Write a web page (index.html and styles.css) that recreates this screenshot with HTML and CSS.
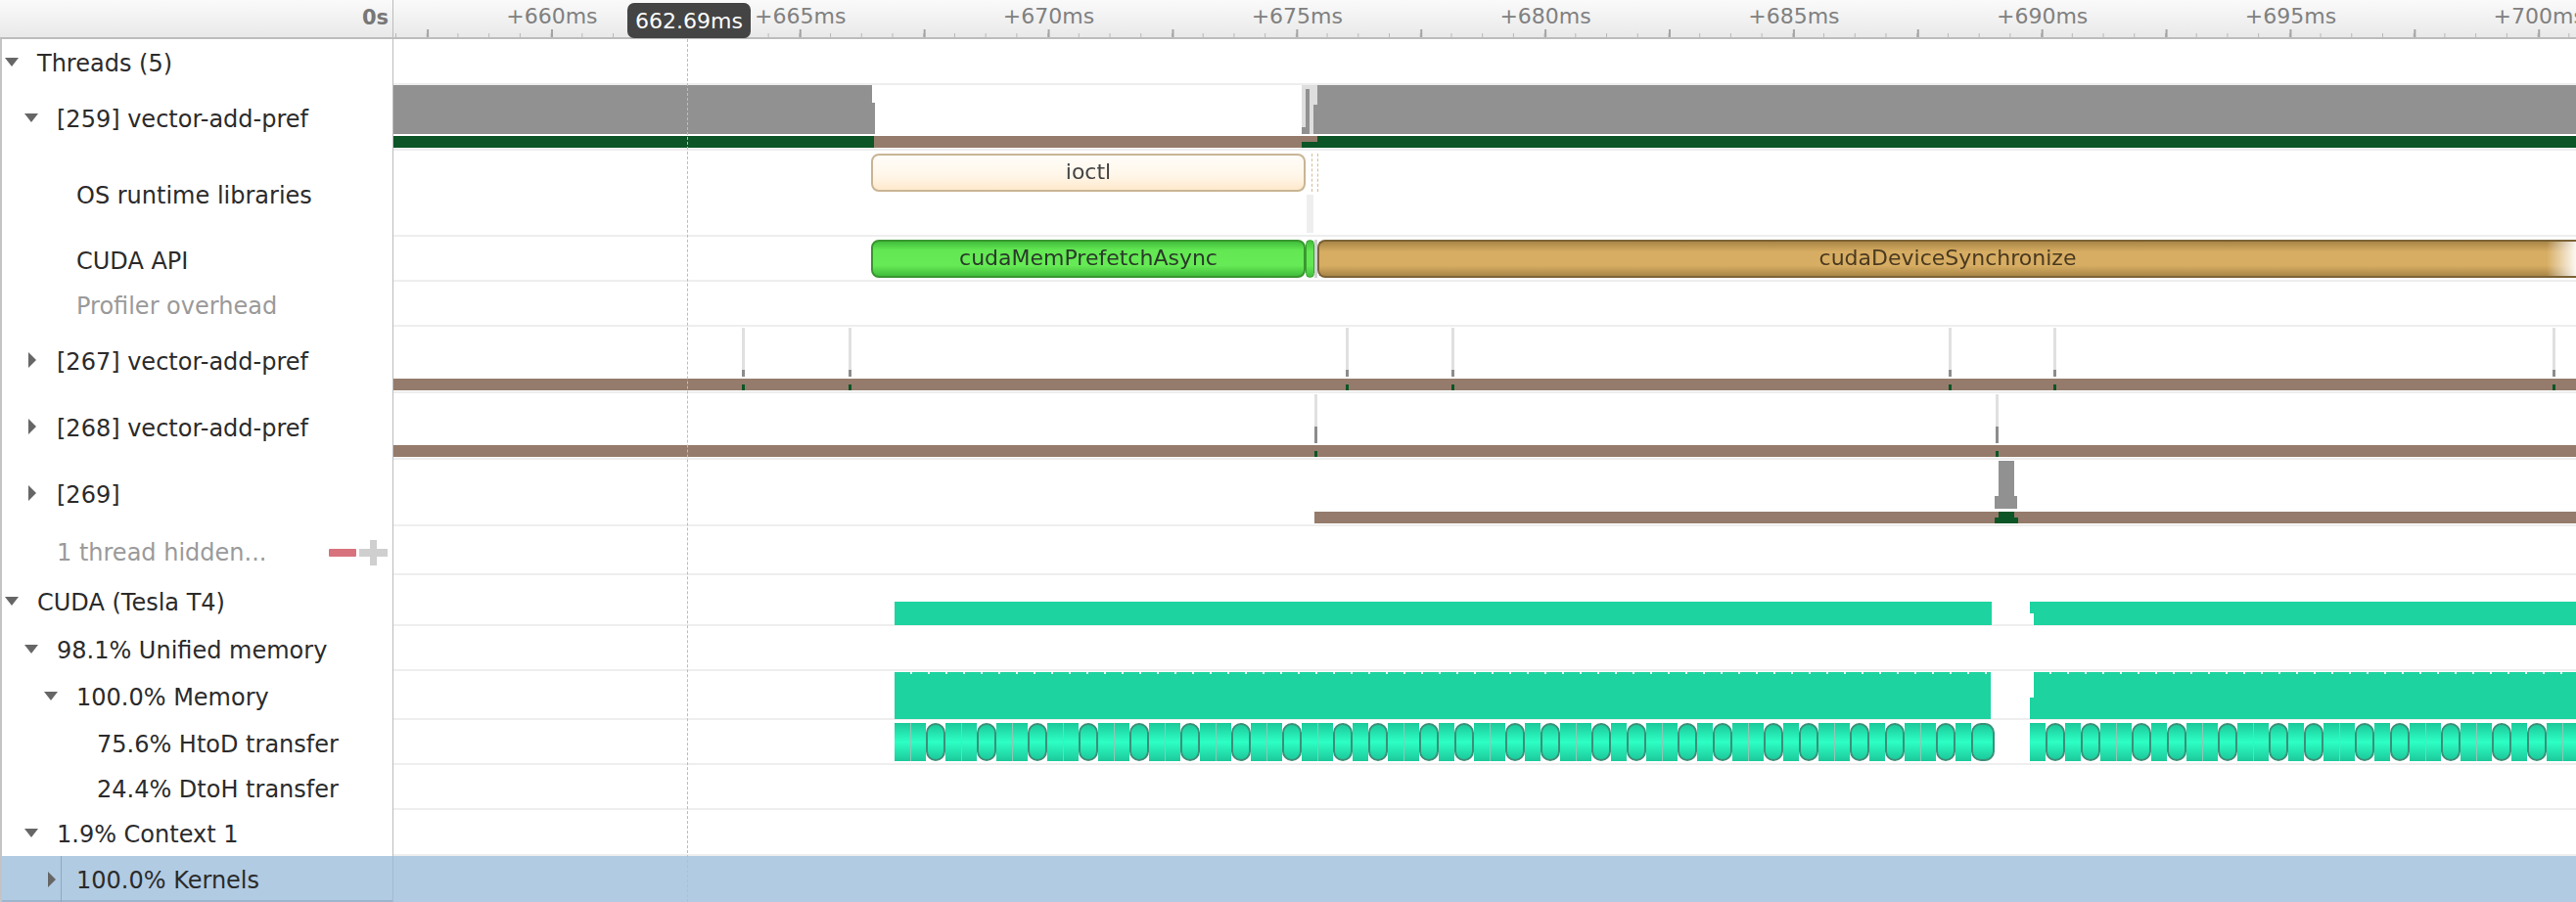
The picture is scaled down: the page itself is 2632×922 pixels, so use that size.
FILE: index.html
```html
<!DOCTYPE html>
<html lang="en">
<head>
  <meta charset="UTF-8">
  <title>Firefox Profiler</title>
  <link rel="stylesheet" href="styles.css">
</head>
<body>
  <div class="profiler">
    <!-- Time ruler -->
    <div class="ruler">
      <div class="ruler-corner">0s</div>
      <div class="ruler-scale">
        <span>+660ms</span><span>+665ms</span><span>+670ms</span><span>+675ms</span><span>+680ms</span>
        <span>+685ms</span><span>+690ms</span><span>+695ms</span><span>+700ms</span>
      </div>
    </div>

    <div class="rows">
      <div class="row h47">
        <div class="label lvl0"><i class="tri down"></i>Threads (5)</div>
        <div class="track"></div>
      </div>

      <div class="row h67">
        <div class="label lvl1"><i class="tri down"></i>[259] vector-add-pref</div>
        <div class="track">
          <div class="graph g259-a"></div>
          <div class="graph g259-notch"></div>
          <div class="graph-shade g259-shade"></div>
          <div class="graph g259-b"></div>
          <div class="graph g259-c"></div>
          <div class="graph g259-d"></div>
          <div class="graph g259-e"></div>
          <div class="bar run r259-a"></div>
          <div class="bar wait r259-b"></div>
          <div class="bar-half run r259-c"></div>
          <div class="bar run r259-d"></div>
        </div>
      </div>

      <div class="row h88">
        <div class="label lvl2">OS runtime libraries</div>
        <div class="track">
          <div class="box box-ioctl">ioctl</div>
          <div class="box-trace"></div>
          <div class="box-gap"></div>
        </div>
      </div>

      <div class="row h46">
        <div class="label lvl2">CUDA API</div>
        <div class="track">
          <div class="box box-prefetch">cudaMemPrefetchAsync</div>
          <div class="box box-small"></div>
          <div class="box-sliver"></div>
          <div class="box box-sync">cudaDeviceSynchronize</div>
        </div>
      </div>

      <div class="row h46">
        <div class="label lvl2 muted">Profiler overhead</div>
        <div class="track"></div>
      </div>

      <div class="row h68">
        <div class="label lvl1"><i class="tri right"></i>[267] vector-add-pref</div>
        <div class="track">
          <div class="bar wait full"></div>
          <div class="tick short" style="left: 358px"></div>
          <div class="tick short" style="left: 467px"></div>
          <div class="tick short" style="left: 975px"></div>
          <div class="tick short" style="left: 1083px"></div>
          <div class="tick short" style="left: 1591px"></div>
          <div class="tick short" style="left: 1698px"></div>
          <div class="tick short" style="left: 2208px"></div>
        </div>
      </div>

      <div class="row h68">
        <div class="label lvl1"><i class="tri right"></i>[268] vector-add-pref</div>
        <div class="track">
          <div class="bar wait full"></div>
          <div class="tick" style="left: 943px"></div>
          <div class="tick" style="left: 1639px"></div>
        </div>
      </div>

      <div class="row h68">
        <div class="label lvl1"><i class="tri right"></i>[269]</div>
        <div class="track">
          <div class="graph g269-a"></div>
          <div class="graph g269-b"></div>
          <div class="bar wait r269-a"></div>
          <div class="bar-half run r269-b"></div>
          <div class="bar-low run r269-c"></div>
        </div>
      </div>

      <div class="row h50">
        <div class="label lvl1 muted">
          1 thread hidden...
          <span class="hide-btn"></span>
          <span class="show-btn"></span>
        </div>
        <div class="track"></div>
      </div>

      <div class="row h52">
        <div class="label lvl0"><i class="tri down"></i>CUDA (Tesla T4)</div>
        <div class="track">
          <div class="teal t-cuda-a"></div>
          <div class="teal t-cuda-b"></div>
          <div class="teal t-cuda-c"></div>
        </div>
      </div>

      <div class="row h46">
        <div class="label lvl1"><i class="tri down"></i>98.1% Unified memory</div>
        <div class="track"></div>
      </div>

      <div class="row h50">
        <div class="label lvl2"><i class="tri down"></i>100.0% Memory</div>
        <div class="track">
          <div class="teal dotted t-mem-a"></div>
          <div class="teal dotted t-mem-b"></div>
          <div class="teal t-mem-c"></div>
        </div>
      </div>

      <div class="row h46">
        <div class="label lvl3">75.6% HtoD transfer</div>
        <div class="track">
          <div class="segs segs-a">
            <i class="s"></i><i class="s"></i><i class="o"></i><i class="s"></i><i class="s"></i><i class="o"></i><i class="s"></i><i class="s"></i><i class="o"></i>
            <i class="s"></i><i class="s"></i><i class="o"></i><i class="s"></i><i class="s"></i><i class="o"></i><i class="s"></i><i class="s"></i><i class="o"></i>
            <i class="s"></i><i class="s"></i><i class="o"></i><i class="s"></i><i class="s"></i><i class="o"></i><i class="s"></i><i class="s"></i><i class="o"></i>
            <i class="s"></i><i class="o"></i><i class="s"></i><i class="s"></i><i class="o"></i><i class="s"></i><i class="o"></i><i class="s"></i><i class="s"></i><i class="o"></i>
            <i class="s"></i><i class="o"></i><i class="s"></i><i class="s"></i><i class="o"></i><i class="s"></i><i class="o"></i><i class="s"></i><i class="s"></i><i class="o"></i>
            <i class="s"></i><i class="o"></i><i class="s"></i><i class="s"></i><i class="o"></i><i class="s"></i><i class="o"></i><i class="s"></i><i class="s"></i><i class="o"></i>
            <i class="s"></i><i class="o"></i><i class="s"></i><i class="s"></i><i class="o"></i><i class="s"></i><i class="o big"></i>
          </div>
          <div class="segs segs-b">
            <i class="s"></i><i class="o"></i><i class="s"></i><i class="o"></i><i class="s"></i><i class="s"></i><i class="o"></i><i class="s"></i><i class="o"></i>
            <i class="s"></i><i class="s"></i><i class="o"></i><i class="s"></i><i class="s"></i><i class="o"></i><i class="s"></i><i class="o"></i><i class="s"></i><i class="s"></i><i class="o"></i>
            <i class="s"></i><i class="o"></i><i class="s"></i><i class="s"></i><i class="o"></i><i class="s"></i><i class="s"></i><i class="o"></i><i class="s"></i><i class="o"></i>
            <i class="s"></i><i class="s"></i>
          </div>
        </div>
      </div>

      <div class="row h46">
        <div class="label lvl3">24.4% DtoH transfer</div>
        <div class="track"></div>
      </div>

      <div class="row h47">
        <div class="label lvl1"><i class="tri down"></i>1.9% Context 1</div>
        <div class="track"></div>
      </div>

      <div class="row selected">
        <div class="label lvl2"><i class="tri right"></i>100.0% Kernels</div>
        <div class="track"></div>
      </div>

      <div class="cursor-line"></div>
    </div>

    <div class="cursor-time">662.69ms</div>
  </div>
</body>
</html>
```

FILE: styles.css
```css
/* Base */
html, body {
  margin: 0;
  padding: 0;
  background: #fff;
}

.profiler {
  position: relative;
  width: 2632px;
  height: 922px;
  overflow: hidden;
  font-family: 'DejaVu Sans', sans-serif;
  font-size: 24px;
  color: #2b2b2b;
  filter: blur(0.7px);
}

/* Ruler */
.ruler {
  display: flex;
  height: 40px;
  box-sizing: border-box;
  border-bottom: 2px solid #bdbdbd;
  background: linear-gradient(#fafafa, #e9e9e9);
}

.ruler-corner {
  width: 402px;
  box-sizing: border-box;
  padding: 6px 4px 0 0;
  text-align: right;
  font-size: 21px;
  font-weight: bold;
  color: #777;
  border-right: 1px solid #bbb;
}

.ruler-scale {
  flex: 1;
  display: flex;
  padding-left: 35px;
  overflow: hidden;
  color: #808080;
  font-size: 22px;
  background-image:
    linear-gradient(to right, #a4a4a4 2px, transparent 2px),
    linear-gradient(to right, #b8b8b8 1px, transparent 1px);
  background-repeat: repeat-x;
  background-size: 126.9px 8px, 31.725px 4px;
  background-position: 161px 100%, 2px 100%;
}

.ruler-scale span {
  flex: 0 0 253.8px;
  padding-top: 3px;
  text-align: center;
  line-height: 28px;
}

.cursor-time {
  position: absolute;
  left: 641px;
  top: 3px;
  width: 126px;
  height: 36px;
  border-radius: 7px;
  background: #444;
  color: #fff;
  font-size: 22px;
  line-height: 37px;
  text-align: center;
}

/* Rows */
.rows {
  position: relative;
}

.row {
  display: flex;
  box-sizing: border-box;
}

.h46 { height: 46px; }
.h47 { height: 47px; }
.h50 { height: 50px; }
.h52 { height: 52px; }
.h67 { height: 67px; }
.h68 { height: 68px; }
.h88 { height: 88px; }

.label {
  position: relative;
  z-index: 1;
  display: flex;
  align-items: center;
  width: 402px;
  margin-right: -2px;
  box-sizing: border-box;
  padding-top: 3px;
  background: #fff;
  border-left: 2px solid #c4c4c4;
  border-right: 1px solid #bbb;
  white-space: nowrap;
}

.lvl0 { padding-left: 36px; }
.lvl1 { padding-left: 56px; }
.lvl2 { padding-left: 76px; }
.lvl3 { padding-left: 97px; }

.muted { color: #9a9a9a; }

.tri {
  position: absolute;
  width: 0;
  height: 0;
}

.tri.down {
  margin-left: -33px;
  margin-top: -3px;
  border-left: 7px solid transparent;
  border-right: 7px solid transparent;
  border-top: 9px solid #666;
}

.tri.right {
  margin-left: -29px;
  margin-top: -3px;
  border-top: 8px solid transparent;
  border-bottom: 8px solid transparent;
  border-left: 8px solid #666;
}

.hide-btn {
  position: absolute;
  left: 334px;
  top: 23px;
  width: 28px;
  height: 8px;
  border-radius: 1px;
  background: #d8727c;
}

.show-btn {
  position: absolute;
  left: 365px;
  top: 14px;
  width: 29px;
  height: 26px;
  background:
    linear-gradient(#cfcfcf, #cfcfcf) center / 100% 8px no-repeat,
    linear-gradient(#cfcfcf, #cfcfcf) center / 7px 100% no-repeat;
}

.track {
  position: relative;
  flex: 1;
  box-sizing: border-box;
  border-bottom: 2px solid #eee;
}

.selected {
  height: 47px;
  background: #b1cbe3;
}

.selected .label {
  background: #b1cbe3;
  border-right-color: #a3bad0;
  box-shadow: inset 0 -2px 0 #9db6ce;
}

.selected .label::before {
  content: '';
  position: absolute;
  left: 60px;
  top: 0;
  bottom: 0;
  border-left: 1px solid #8fa8bf;
}

.selected .track {
  border-bottom: 0;
}

.cursor-line {
  position: absolute;
  z-index: 2;
  left: 702px;
  top: 0;
  bottom: 0;
  border-left: 1px dashed #bdbdbd;
}

/* Thread graphs */
.graph, .graph-shade {
  position: absolute;
  background: #919191;
}

.graph-shade { background: #dedede; }

.g259-a { left: 0; top: 0; width: 491px; height: 50px; }
.g259-notch { left: 491px; top: 18px; width: 3px; height: 32px; }
.g259-shade { left: 930px; top: 0; width: 16px; height: 50px; }
.g259-b { left: 934px; top: 4px; width: 4px; height: 46px; }
.g259-c { left: 930px; top: 43px; width: 8px; height: 7px; }
.g259-d { left: 942px; top: 20px; width: 4px; height: 30px; }
.g259-e { left: 946px; top: 0; right: 0; height: 50px; }

.g269-a { left: 1642px; top: 1px; width: 16px; height: 49px; }
.g269-b { left: 1638px; top: 37px; width: 23px; height: 13px; }

.bar, .bar-half, .bar-low {
  position: absolute;
  top: 52px;
  height: 12px;
}

.row.h68 .bar { top: 53px; }
.bar-half { height: 6px; }
.row.h68 .bar-half { top: 53px; }
.bar-low { height: 6px; }
.row.h68 .bar-low { top: 59px; }

.run { background: #0b5526; }
.wait { background: #957b6b; }
.full { left: 0; right: 0; }

.r259-a { left: 0; width: 493px; }
.r259-b { left: 493px; width: 453px; }
.r259-c { left: 930px; width: 16px; top: 58px; }
.r259-d { left: 946px; right: 0; }

.r269-a { left: 943px; right: 0; }
.r269-b { left: 1642px; width: 16px; }
.r269-c { left: 1638px; width: 24px; }

.tick {
  position: absolute;
  top: 1px;
  width: 3px;
  height: 64px;
  background:
    linear-gradient(#0b5526, #0b5526) 0 100% / 100% 6px no-repeat,
    linear-gradient(#e0e0e0 0, #e0e0e0 33px, #8c8c8c 33px, #8c8c8c 50px, transparent 50px);
}

.tick.short {
  background:
    linear-gradient(#0b5526, #0b5526) 0 100% / 100% 6px no-repeat,
    linear-gradient(#e0e0e0 0, #e0e0e0 43px, #8c8c8c 43px, #8c8c8c 50px, transparent 50px);
}

/* Marker boxes */
.box {
  position: absolute;
  top: 3px;
  height: 39px;
  box-sizing: border-box;
  border-radius: 8px;
  font-size: 22px;
  line-height: 34px;
  text-align: center;
  color: #444;
  overflow: hidden;
}

.box-ioctl {
  left: 490px;
  width: 444px;
  border: 2px solid #c9b594;
  background: linear-gradient(#fffdf9, #fff6e8 60%, #ffe9cc);
}

.box-trace {
  position: absolute;
  left: 940px;
  top: 3px;
  width: 5px;
  height: 39px;
  border-left: 1px dashed #d3bd98;
  border-right: 1px dashed #d3bd98;
}

.box-gap {
  position: absolute;
  left: 935px;
  top: 45px;
  width: 7px;
  height: 39px;
  background: #eee;
}

.box-prefetch {
  left: 490px;
  width: 444px;
  border: 2px solid #39962f;
  background: linear-gradient(#41bd3d, #63e853 25%, #66ea55 70%, #41bd3d);
  color: #2a3a2a;
}

.box-small {
  left: 934px;
  width: 9px;
  border: 1px solid #39a02f;
  background: linear-gradient(#41bd3d, #63e853 30%, #63e853 70%, #41bd3d);
}

.box-sliver {
  position: absolute;
  left: 943px;
  top: 3px;
  width: 3px;
  height: 39px;
  background: #d2d2d2;
}

.box-sync {
  left: 946px;
  right: 0;
  border: 2px solid #7c6337;
  border-right: 0;
  border-radius: 8px 0 0 8px;
  background: linear-gradient(#a98647, #d7ad63 30%, #d7ad63 70%, #a98647);
  color: #4a3a20;
}

.box-sync::after {
  content: '';
  position: absolute;
  right: 0;
  top: -2px;
  bottom: -2px;
  width: 30px;
  background: linear-gradient(to right, rgba(255, 255, 255, 0), rgba(255, 255, 255, 0.92));
}

/* CUDA tracks */
.teal {
  position: absolute;
  background: #1dd3a0;
}

.t-cuda-a { left: 514px; top: 27px; width: 1121px; height: 24px; }
.t-cuda-b { left: 1674px; top: 27px; right: 0; height: 12px; }
.t-cuda-c { left: 1678px; top: 39px; right: 0; height: 12px; }

.t-mem-a { left: 514px; top: 1px; width: 1120px; height: 48px; }
.t-mem-b { left: 1678px; top: 1px; right: 0; height: 26px; }
.t-mem-c { left: 1674px; top: 27px; right: 0; height: 22px; }

.dotted::before {
  content: '';
  position: absolute;
  left: 0;
  right: 0;
  top: 0;
  height: 2px;
  background: repeating-linear-gradient(to right, #1dd3a0 0, #1dd3a0 16px, #dff7ef 16px, #dff7ef 18px);
}

.segs {
  position: absolute;
  top: 3px;
  height: 39px;
  display: flex;
  overflow: hidden;
}

.segs-a { left: 514px; width: 1124px; }
.segs-b { left: 1674px; right: 0; }

.segs i {
  flex: none;
  height: 39px;
  box-sizing: border-box;
  background: linear-gradient(#1cc99b, #2dffc4 50%, #1cc99b);
}

.segs .s { width: 16px; }
.segs .s + .s { border-left: 1px solid #8fc7b5; }

.segs .o {
  width: 20px;
  border: 2px solid #3d8f78;
  border-radius: 10px;
}

.segs .o.big { width: 24px; }
```
